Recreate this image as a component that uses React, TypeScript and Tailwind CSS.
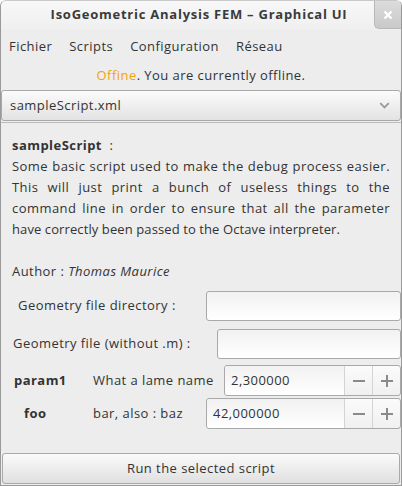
import React from "react";

const F = { fontFamily: '"Open Sans", "DejaVu Sans", sans-serif' };

function Spin({ value }: { value: string }) {
  return (
    <div className="flex h-[31px] flex-1 rounded-[3px] border border-[#a9a9a9] bg-gradient-to-b from-[#fbfbfb] to-[#f0f0f0]">
      <div className="flex flex-1 items-center pl-[6px] text-[13px] text-[#333] bg-gradient-to-b from-[#f1f1f1] to-white rounded-l-[3px]">{value}</div>
      <div className="flex w-[28px] items-center justify-center border-l border-[#d4d4d4]">
        <svg width="12" height="12" viewBox="0 0 12 12"><rect x="0" y="5" width="12" height="2" fill="#8a8a8a" /></svg>
      </div>
      <div className="flex w-[28px] items-center justify-center border-l border-[#d4d4d4]">
        <svg width="12" height="12" viewBox="0 0 12 12"><rect x="0" y="5" width="12" height="2" fill="#8a8a8a" /><rect x="5" y="0" width="2" height="12" fill="#8a8a8a" /></svg>
      </div>
    </div>
  );
}

function Entry() {
  return <div className="h-[30px] flex-1 rounded-[3px] border border-[#a9a9a9] bg-gradient-to-b from-[#f1f1f1] to-white" />;
}

export default function App() {
  return (
    <div style={F} className="flex h-[486px] w-[402px] flex-col overflow-hidden rounded-t-[6px] border border-t-[#c8c8c8] border-x-[#9a9a9a] border-b-[#9a9a9a] bg-[#ededed] text-[#333] tracking-[0.45px]">
      <div className="relative flex h-[29px] items-center justify-center bg-gradient-to-b from-[#f8f8f8] to-[#efefef]">
        <span className="-mt-[2px] pr-[4px] text-[13px] font-bold tracking-[0.75px] text-[#3a3a3a]">IsoGeometric Analysis FEM – Graphical UI</span>
        <div className="absolute right-0 top-0 flex h-[28px] w-[27px] items-center justify-center rounded-bl-[5px] border-b border-l border-[#b8b8b8] bg-gradient-to-b from-[#dcdcdc] to-[#c9c9c9]">
          <svg width="10" height="10" viewBox="0 0 10 10"><path d="M1.5 1.5 L8.5 8.5 M8.5 1.5 L1.5 8.5" stroke="#fff" strokeWidth="2.4" /></svg>
        </div>
      </div>
      <div className="flex h-[33px] items-center gap-[17px] pl-[8px] text-[13px]">
        <span>Fichier</span>
        <span>Scripts</span>
        <span>Configuration</span>
        <span>Réseau</span>
      </div>
      <div className="flex h-[26px] items-center justify-center text-[13px]">
        <span className="text-[#f2a20c]">Offine</span>
        <span>. You are currently offline.</span>
      </div>
      <div className="mt-[1px] flex h-[31px] items-center justify-between rounded-[3px] border border-[#a9a9a9] bg-gradient-to-b from-[#fbfbfb] to-[#e3e3e3] pl-[8px] pr-[10px] text-[13px]">
        <span>sampleScript.xml</span>
        <svg width="11" height="7" viewBox="0 0 11 7"><path d="M1.2 1.2 L5.5 5.5 L9.8 1.2" stroke="#9a9a9a" strokeWidth="1.8" fill="none" /></svg>
      </div>
      <div className="mt-[1px] flex flex-1 flex-col border-t border-[#bcbcbc]">
        <div className="pl-[11px] pr-[11px] pt-[12px] text-[13px] leading-[21px]">
          <div><span className="font-bold">sampleScript</span><span>&nbsp; :</span></div>
          <div className="text-justify [text-align-last:justify]">Some basic script used to make the debug process easier.</div>
          <div className="text-justify [text-align-last:justify]">This will just print a bunch of useless things to the</div>
          <div className="text-justify [text-align-last:justify]">command line in order to ensure that all the parameter</div>
          <div className="tracking-[0.1px]">have correctly been passed to the Octave interpreter.</div>
          <div className="mt-[21px]">Author : <span className="italic">Thomas Maurice</span></div>
        </div>
        <div className="mt-[9px] flex items-center text-[13px]">
          <span className="ml-[17px] w-[188px]">Geometry file directory :</span>
          <Entry />
        </div>
        <div className="mt-[8px] flex items-center text-[13px]">
          <span className="ml-[12px] w-[204px]">Geometry file (without .m) :</span>
          <Entry />
        </div>
        <div className="mt-[6px] flex items-center text-[13px]">
          <span className="ml-[13px] w-[79px] font-bold">param1</span>
          <span className="w-[131px]">What a lame name</span>
          <Spin value="2,300000" />
        </div>
        <div className="mt-[2px] flex items-center text-[13px]">
          <span className="ml-[23px] w-[69px] font-bold">foo</span>
          <span className="w-[113px]">bar, also : baz</span>
          <Spin value="42,000000" />
        </div>
      </div>
      <div className="mx-[1px] mb-[1px] flex h-[31px] items-center justify-center rounded-[3px] border border-[#a9a9a9] bg-gradient-to-b from-[#fafafa] to-[#e0e0e0] text-[13px]">
        Run the selected script
      </div>
    </div>
  );
}
